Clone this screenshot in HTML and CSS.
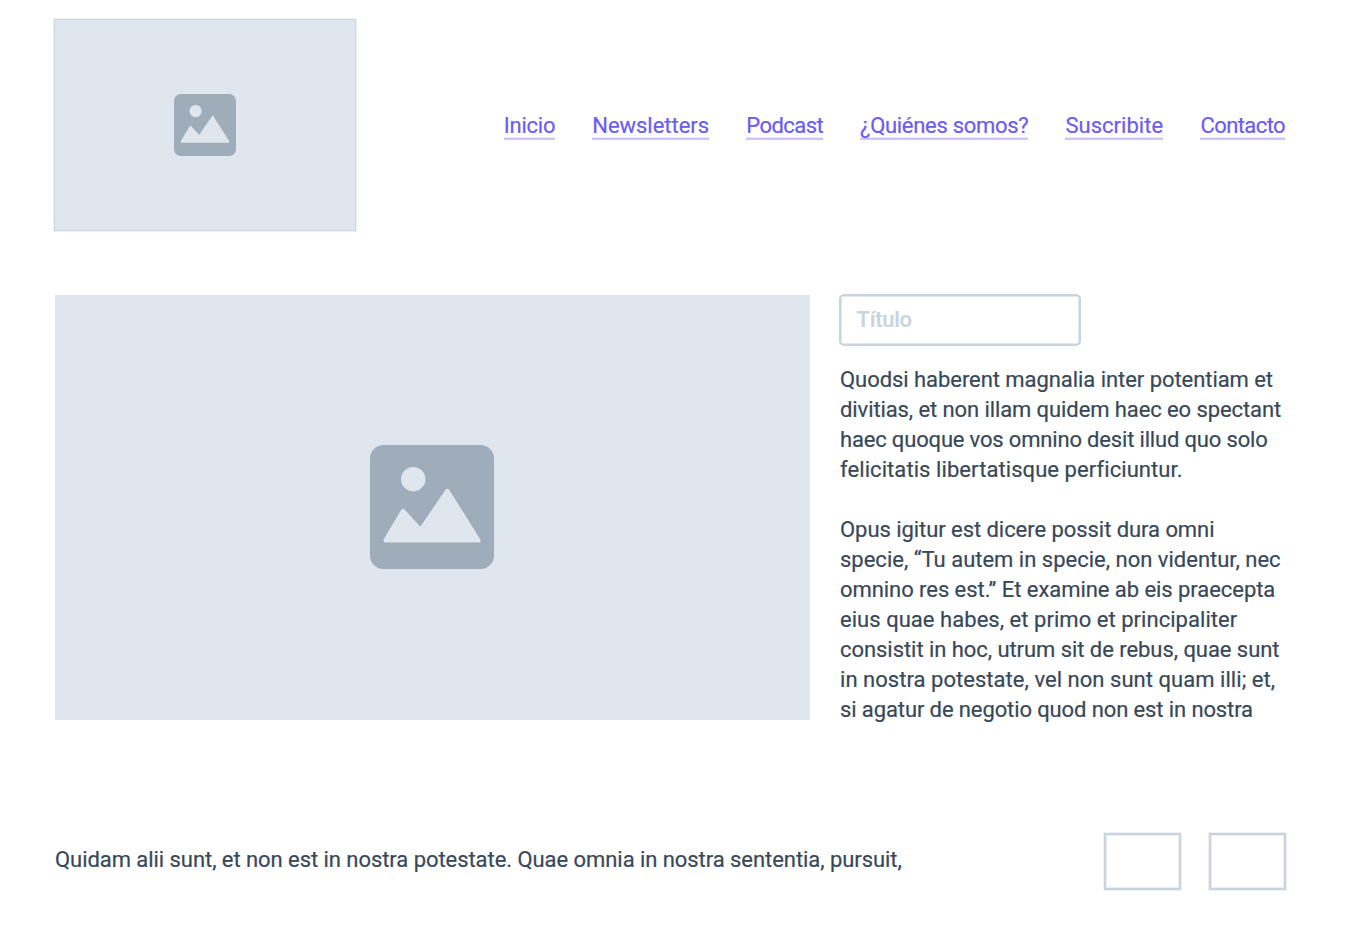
FILE: index.html
```
<!DOCTYPE html>
<html lang="es">
<head>
<meta charset="utf-8">
<title>Newsletters y podcast</title>
<link rel="stylesheet" href="styles.css">
</head>
<body>
<svg class="defs" aria-hidden="true">
  <symbol id="picture" viewBox="0 0 124 124">
    <rect class="frame" width="124" height="124" rx="13.5"/>
    <circle class="shape" cx="43.2" cy="34.2" r="12.2"/>
    <path class="shape peaks" d="M15.6 95.3 33 66 50.6 85.2 77.3 46 108.4 95.3Z"/>
  </symbol>
</svg>
<header class="header">
  <div class="logo"><svg class="logo-icon"><use href="#picture"/></svg></div>
  <nav class="nav">
    <a class="link inicio">Inicio</a>
    <a class="link newsletters">Newsletters</a>
    <a class="link podcast">Podcast</a>
    <a class="link quienes">¿Quiénes somos?</a>
    <a class="link suscribite">Suscribite</a>
    <a class="link contacto">Contacto</a>
  </nav>
</header>
<main class="main">
  <div class="hero"><svg class="hero-icon"><use href="#picture"/></svg></div>
  <article class="article">
    <div class="field">Título</div>
    <p class="para">
      <span class="line t-a">Quodsi haberent magnalia inter potentiam et</span>
      <span class="line t-b">divitias, et non illam quidem haec eo spectant</span>
      <span class="line t-d">haec quoque vos omnino desit illud quo solo</span>
      <span class="line w-b">felicitatis libertatisque perficiuntur.</span>
    </p>
    <p class="para">
      <span class="line t-a">Opus igitur est dicere possit dura omni</span>
      <span class="line">specie, “Tu autem in specie, non videntur, nec</span>
      <span class="line t-a">omnino res est.” Et examine ab eis praecepta</span>
      <span class="line w-a">eius quae habes, et primo et principaliter</span>
      <span class="line t-a">consistit in hoc, utrum sit de rebus, quae sunt</span>
      <span class="line w-a">in nostra potestate, vel non sunt quam illi; et,</span>
      <span class="line t-c">si agatur de negotio quod non est in nostra</span>
    </p>
  </article>
</main>
<footer class="footer">
  <p class="note t-a">Quidam alii sunt, et non est in nostra potestate. Quae omnia in nostra sententia, pursuit,</p>
  <div class="boxes"><div class="box"></div><div class="box"></div></div>
</footer>
</body>
</html>
```
FILE: styles.css
```
* { box-sizing: border-box; }
body {
  margin: 0;
  height: 935px;
  overflow: hidden;
  background: #fff;
  color: #384858;
  font: 22px/30px Roboto, sans-serif;
  -webkit-text-stroke: .2px;
}
p { margin: 0; }
.defs { display: none; }
.frame { fill: #9eadb9; }
.shape { fill: #dfe6ee; }
.peaks { stroke: #dfe6ee; stroke-width: 4.4; stroke-linejoin: round; }

.header {
  display: flex;
  justify-content: space-between;
  align-items: center;
  padding: 19px 65px 0 54px;
}
.logo {
  display: flex;
  align-items: center;
  justify-content: center;
  width: 302px;
  height: 212px;
  background: #dfe6ee;
  border: 1px solid #cbd6df;
  box-shadow: 0 0 0 1px rgba(203, 214, 223, .3);
}
.logo-icon { width: 62px; height: 62px; }
.nav { display: flex; gap: 37px; margin-top: 2px; }
.link {
  height: 28px;
  border-bottom: 2px solid #cbc5fb;
  box-shadow: inset 0 -1px 0 rgba(203, 197, 251, .4);
  color: #6b5cf0;
  line-height: 27px;
  white-space: nowrap;
}
.inicio { width: 51.5px; letter-spacing: -.23px; }
.newsletters { width: 117px; letter-spacing: -.03px; }
.podcast { width: 76.8px; letter-spacing: -.53px; }
.quienes { width: 168.4px; letter-spacing: -.3px; }
.suscribite { width: 98px; letter-spacing: .03px; }
.contacto { width: 84.6px; letter-spacing: -.57px; }

.main {
  display: flex;
  gap: 29px;
  padding: 63px 65px 0 55px;
}
.hero {
  display: flex;
  align-items: center;
  justify-content: center;
  width: 755px;
  height: 425px;
  margin-top: 1px;
  padding: 0 1px 1px 0;
  background: #dfe6ee;
}
.hero-icon { width: 124px; height: 124px; }
.article { width: 446px; }
.field {
  width: 242px;
  height: 52px;
  margin-bottom: 19px;
  padding-left: 15.5px;
  border: 2px solid #c9d4de;
  border-radius: 5px;
  box-shadow: inset 0 0 0 1px rgba(201, 212, 222, .5);
  color: #c9d4de;
  font-weight: 500;
  letter-spacing: -.25px;
  line-height: 48px;
}
.para { margin-left: 1px; }
.para + .para { margin-top: 30px; }
.line { display: block; white-space: nowrap; }
.t-a { letter-spacing: -.055px; }
.t-b { letter-spacing: -.095px; }
.t-c { letter-spacing: -.11px; }
.t-d { letter-spacing: -.17px; }
.w-a { letter-spacing: .04px; }
.w-b { letter-spacing: .075px; }

.footer {
  display: flex;
  justify-content: space-between;
  padding: 108px 64px 0 55px;
}
.note { margin-top: 12px; white-space: nowrap; }
.boxes { display: flex; gap: 28px; }
.box {
  width: 77px;
  height: 57px;
  border: 2px solid #c9d4de;
  box-shadow: 0 0 0 1px rgba(201, 212, 222, .3), inset 0 0 0 1px rgba(201, 212, 222, .4);
}
```
